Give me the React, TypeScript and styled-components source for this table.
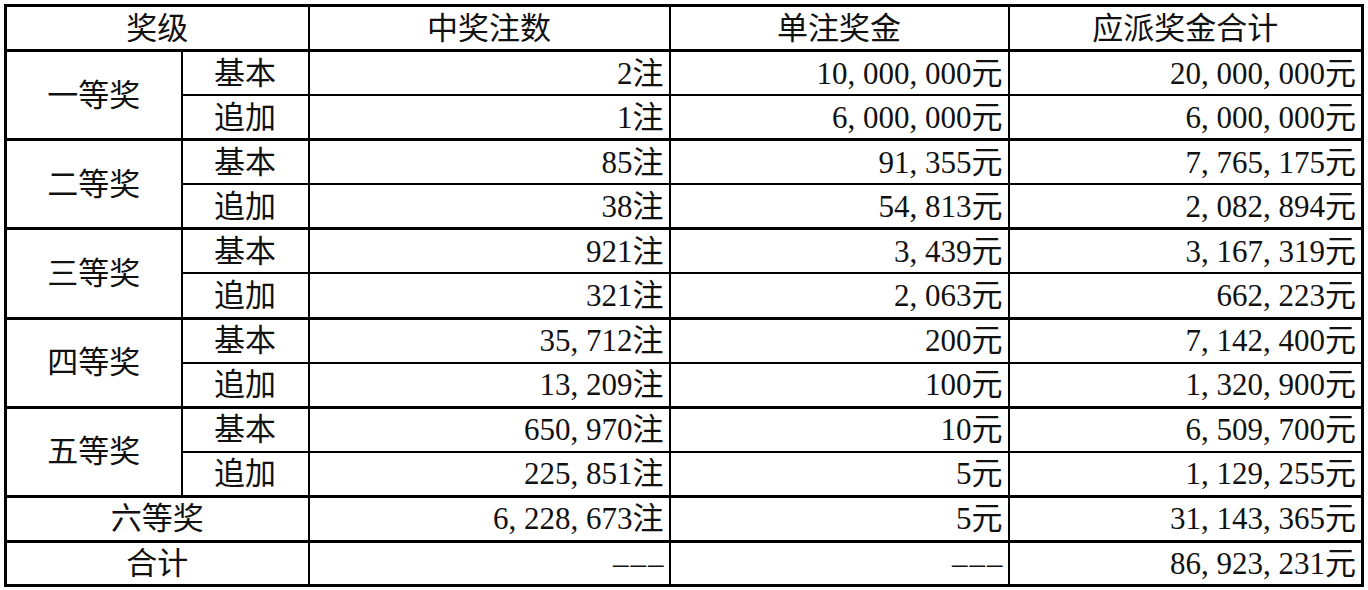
import styled, { createGlobalStyle } from "styled-components";

const GlobalStyle = createGlobalStyle`
  body {
    margin: 0;
    background: #fff;
  }
`;

const Wrap = styled.div`
  padding: 4px 0 0 4px;
`;

const Table = styled.table`
  border-collapse: collapse;
  table-layout: fixed;
  width: 1357px;
  border: 3px solid #000;
  font-family: "Liberation Serif", "Noto Sans CJK SC", serif;
  font-size: 31px;
  color: #111;
`;

const Row = styled.tr<{ $group?: boolean; $head?: boolean }>`
  height: ${(p) => (p.$head ? "45px" : "44.6px")};

  td,
  th {
    border-top: ${(p) => (p.$group ? "3px" : "2px")} solid #000;
  }
`;

const HeadCell = styled.th`
  font-weight: normal;
  text-align: center;
  border: 2px solid #000;
  border-bottom-width: 3px;
  padding: 0;
  line-height: 1;
`;

const LabelCell = styled.td`
  text-align: center;
  border: 2px solid #000;
  padding: 0;
  line-height: 1;
`;

const NumCell = styled.td`
  text-align: right;
  border: 2px solid #000;
  padding: 0 5px 0 0;
  line-height: 1;
  white-space: nowrap;
`;

const Comma = styled.span`
  display: inline-block;
  width: 0.5em;
  text-align: left;
`;

const Dash = styled.span`
  letter-spacing: 2px;
  margin-right: -2px;
`;

function Num({ value }: { value: string }) {
  if (value === "---") return <Dash>–––</Dash>;
  const parts = value.split(",");
  return (
    <>
      {parts.map((p, i) => (
        <span key={i}>
          {p}
          {i < parts.length - 1 && <Comma>,</Comma>}
        </span>
      ))}
    </>
  );
}

type Sub = { kind: string; count: string; unit: string; total: string };
type Group = { name: string; rows: Sub[] };

const groups: Group[] = [
  {
    name: "一等奖",
    rows: [
      { kind: "基本", count: "2", unit: "10,000,000", total: "20,000,000" },
      { kind: "追加", count: "1", unit: "6,000,000", total: "6,000,000" },
    ],
  },
  {
    name: "二等奖",
    rows: [
      { kind: "基本", count: "85", unit: "91,355", total: "7,765,175" },
      { kind: "追加", count: "38", unit: "54,813", total: "2,082,894" },
    ],
  },
  {
    name: "三等奖",
    rows: [
      { kind: "基本", count: "921", unit: "3,439", total: "3,167,319" },
      { kind: "追加", count: "321", unit: "2,063", total: "662,223" },
    ],
  },
  {
    name: "四等奖",
    rows: [
      { kind: "基本", count: "35,712", unit: "200", total: "7,142,400" },
      { kind: "追加", count: "13,209", unit: "100", total: "1,320,900" },
    ],
  },
  {
    name: "五等奖",
    rows: [
      { kind: "基本", count: "650,970", unit: "10", total: "6,509,700" },
      { kind: "追加", count: "225,851", unit: "5", total: "1,129,255" },
    ],
  },
];

export default function App() {
  return (
    <Wrap>
      <GlobalStyle />
      <Table>
        <colgroup>
          <col style={{ width: 176 }} />
          <col style={{ width: 127 }} />
          <col style={{ width: 361 }} />
          <col style={{ width: 339 }} />
          <col style={{ width: 354 }} />
        </colgroup>
        <thead>
          <Row $head $group>
            <HeadCell colSpan={2}>奖级</HeadCell>
            <HeadCell>中奖注数</HeadCell>
            <HeadCell>单注奖金</HeadCell>
            <HeadCell>应派奖金合计</HeadCell>
          </Row>
        </thead>
        <tbody>
          {groups.map((g) =>
            g.rows.map((r, i) => (
              <Row key={g.name + r.kind} $group={i === 0}>
                {i === 0 && <LabelCell rowSpan={2}>{g.name}</LabelCell>}
                <LabelCell>{r.kind}</LabelCell>
                <NumCell>
                  <Num value={r.count} />注
                </NumCell>
                <NumCell>
                  <Num value={r.unit} />元
                </NumCell>
                <NumCell>
                  <Num value={r.total} />元
                </NumCell>
              </Row>
            ))
          )}
          <Row $group>
            <LabelCell colSpan={2}>六等奖</LabelCell>
            <NumCell>
              <Num value="6,228,673" />注
            </NumCell>
            <NumCell>
              <Num value="5" />元
            </NumCell>
            <NumCell>
              <Num value="31,143,365" />元
            </NumCell>
          </Row>
          <Row $group>
            <LabelCell colSpan={2}>合计</LabelCell>
            <NumCell>
              <Num value="---" />
            </NumCell>
            <NumCell>
              <Num value="---" />
            </NumCell>
            <NumCell>
              <Num value="86,923,231" />元
            </NumCell>
          </Row>
        </tbody>
      </Table>
    </Wrap>
  );
}
